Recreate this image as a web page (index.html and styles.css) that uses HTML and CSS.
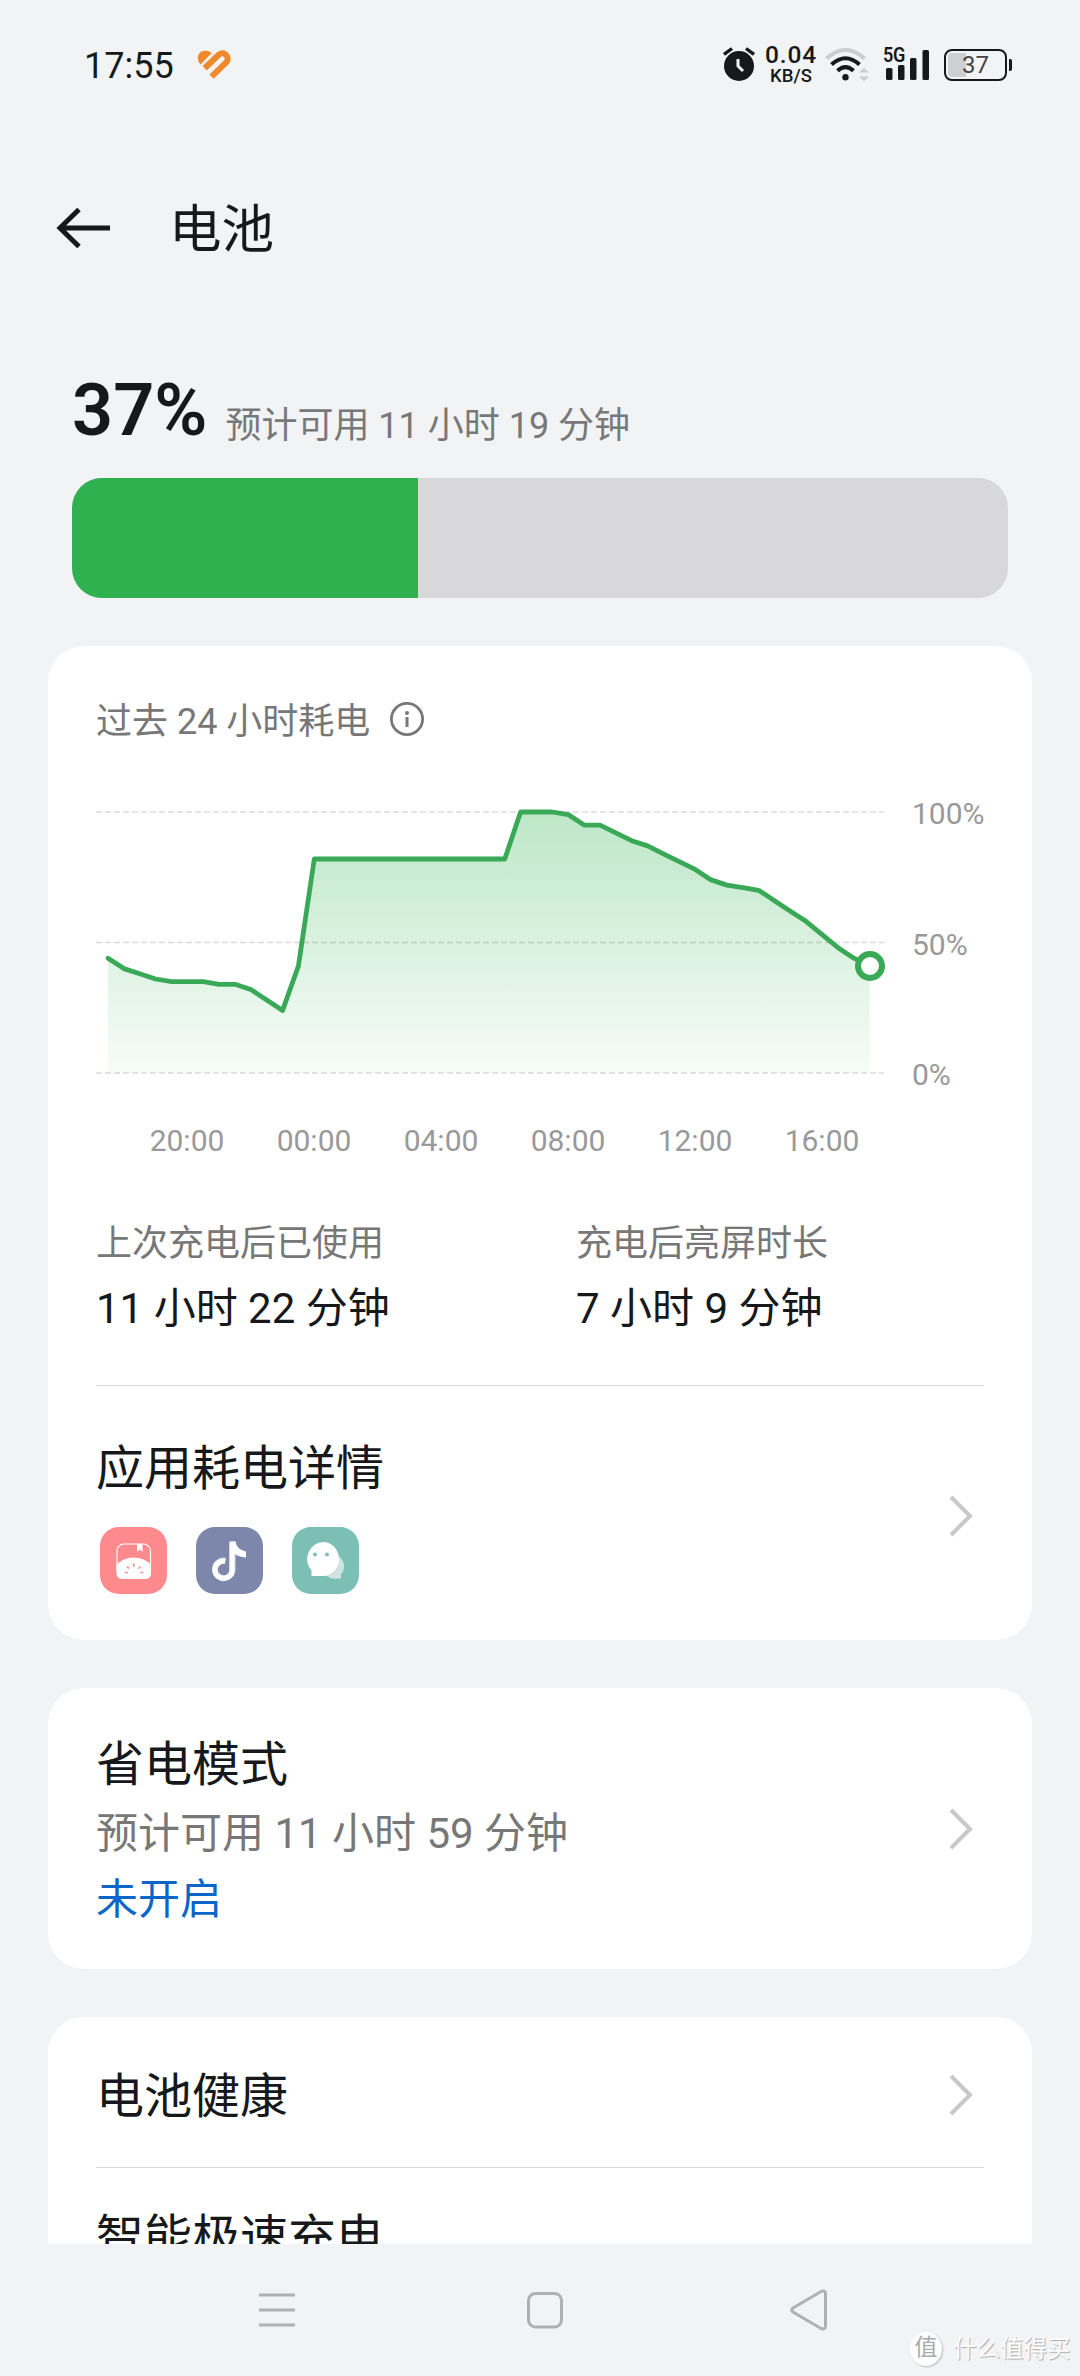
FILE: index.html
```html
<!DOCTYPE html>
<html lang="zh-CN">
<head>
<meta charset="utf-8">
<title>电池</title>
<link rel="stylesheet" href="styles.css">
</head>
<body>
<div class="screen">
  <header class="status">
    <span class="clock">17:55</span>
    <svg class="heart" width="34" height="30" viewBox="0 0 34 30">
      <path d="M3.6 14.4 C-1.4 9.800 0.400 0.800 8.200 0.800 C10.600 0.800 12.800 1.400 14.800 2.900 Z" fill="#ee8a2c"/>
      <path d="M7.600 18.200 L21.500 5 A5.300 5.300 0 0 1 29.200 12.400 L14.600 26.600" fill="none" stroke="#ee8a2c" stroke-width="6"/>
    </svg>
    <div class="tray">
      <svg class="alarm" width="32" height="36" viewBox="0 0 32 36">
        <circle cx="16" cy="20" r="15" fill="#16181a"/>
        <path d="M1 8.500 L9 2.500 M31 8.500 L23 2.500" stroke="#16181a" stroke-width="3.400"/>
        <path d="M15 13 V20 L20 25" fill="none" stroke="#f2f3f5" stroke-width="3"/>
      </svg>
      <div class="speed"><b>0.04</b><span>KB/S</span></div>
      <svg class="wifi" width="44" height="34" viewBox="0 0 44 34">
        <g fill="none">
          <path d="M1.500 10.500 Q20.500 -6.500 39.500 10.500" stroke="#cdcdcf" stroke-width="3.800"/>
          <path d="M6.500 16.500 Q20.500 4 34.500 16.500" stroke="#16181a" stroke-width="4"/>
          <path d="M12.500 22.800 Q20.500 15.500 28.500 22.800" stroke="#16181a" stroke-width="4"/>
        </g>
        <circle cx="20.500" cy="29.300" r="3.200" fill="#16181a"/>
        <path d="M34 24.500 L39 20 L44 24.500 Z M34 28.500 L39 33 L44 28.500 Z" fill="#cdcdcf"/>
      </svg>
      <div class="cell">
        <span class="gen">5G</span>
        <svg width="44" height="32" viewBox="0 0 44 32" fill="#16181a">
          <rect x="0" y="19" width="6.500" height="12" rx="1.500"/>
          <rect x="12" y="16" width="6.500" height="15" rx="1.500"/>
          <rect x="24" y="9" width="6.500" height="22" rx="1.500"/>
          <rect x="36.500" y="1" width="6.500" height="30" rx="1.500"/>
        </svg>
      </div>
      <div class="batt"><span class="batt-case"><i></i><em>37</em></span><span class="batt-tip"></span></div>
    </div>
  </header>

  <div class="titlebar">
    <svg width="54" height="40" viewBox="0 0 54 40"><path d="M54 20 H4 M23 1.500 L4 20 L23 38.500" fill="none" stroke="#16181a" stroke-width="5"/></svg>
    <h1>电池</h1>
  </div>

  <section class="summary">
    <strong>37%</strong><span>预计可用 11 小时 19 分钟</span>
  </section>
  <div class="bar"><div class="bar-fill" style="width:37%"></div></div>

  <main class="cards">
    <section class="card usage">
      <div class="card-head">
        <span>过去 24 小时耗电</span>
        <svg width="36" height="36" viewBox="0 0 36 36"><circle cx="18" cy="18" r="15.600" fill="none" stroke="#777" stroke-width="2.800"/><circle cx="18" cy="12" r="2" fill="#777"/><path d="M18 16 V26" stroke="#777" stroke-width="3"/></svg>
      </div>
      <div class="plot">
        <svg width="796" height="290" viewBox="0 0 796 290">
          <defs><linearGradient id="fade" gradientUnits="userSpaceOnUse" x1="0" y1="12" x2="0" y2="273"><stop offset="0" stop-color="#bde7c7"/><stop offset="1" stop-color="#f7fcf8"/></linearGradient></defs>
          <path id="area" fill="url(#fade)"/>
          <path d="M0 12 H788 M0 142.500 H788 M0 273 H788" stroke="#000" stroke-opacity=".14" stroke-width="1.600" stroke-dasharray="6 3"/>
          <path id="line" fill="none" stroke="#3aa957" stroke-width="4.800" stroke-linejoin="round" stroke-linecap="round"/>
          <circle cx="774" cy="166" r="12" fill="#fff" stroke="#3aa957" stroke-width="6"/>
        </svg>
        <div class="yaxis"><span>100%</span><span>50%</span><span>0%</span></div>
      </div>
      <div class="xaxis"><span>20:00</span><span>00:00</span><span>04:00</span><span>08:00</span><span>12:00</span><span>16:00</span></div>
      <div class="stats">
        <div><span>上次充电后已使用</span><b>11 小时 22 分钟</b></div>
        <div><span>充电后亮屏时长</span><b>7 小时 9 分钟</b></div>
      </div>
      <div class="row apps">
        <div>
          <h2>应用耗电详情</h2>
          <div class="icons">
            <svg width="68" height="68" viewBox="0 0 68 68">
              <rect width="67" height="67" rx="19" fill="#ff8a8d"/>
              <rect x="17" y="17" width="33.500" height="34" rx="7" fill="none" stroke="#fff" stroke-width="1.200"/>
              <path d="M37 17 H42.500 V25 L39.700 22.500 L37 25 Z" fill="#fff"/>
              <path d="M16.500 38 Q23 30.500 33.700 30.500 Q44.500 30.500 51 38 V46 Q51 52 45 52 H23 Q16.500 52 16.500 46 Z" fill="#fff"/>
              <path d="M33.700 37 V39 M27.500 40 L28.500 41 M40 40 L39 41 M25.500 45.500 H27 M41 45.500 H42.500" stroke="#ff8a8d" stroke-width="1.700" stroke-linecap="round"/>
            </svg>
            <svg width="68" height="68" viewBox="0 0 68 68">
              <rect width="67" height="67" rx="19" fill="#7c87ab"/>
              <path d="M36.500 15 V42.500 A8.800 8.800 0 1 1 29.500 33.800" fill="none" stroke="#d5d9e8" stroke-width="6"/>
              <path d="M36 14.500 V42.500 A8.500 8.500 0 1 1 29 34.500" fill="none" stroke="#fff" stroke-width="5"/>
              <path d="M36 14.500 H39.500 Q40.500 22.500 50 24.500 V30.500 Q42 30 37 25.500 Z" fill="#fff"/>
            </svg>
            <svg width="68" height="68" viewBox="0 0 68 68">
              <rect width="67" height="67" rx="19" fill="#7bbfb5"/>
              <path d="M47 29 Q52.500 34 52 41 Q51.500 45 49 47 V51.500 H45 Q38 52.500 34 48 Z" fill="#cfe3e0"/>
              <path d="M31 15 A16 17 0 0 1 31 49 H19.500 V43.500 A16 17 0 0 1 31 15 Z" fill="#fff"/>
              <circle cx="23" cy="27.500" r="2" fill="#7bbfb5"/><circle cx="35" cy="27.500" r="2" fill="#7bbfb5"/>
            </svg>
          </div>
        </div>
        <svg class="chev" width="24" height="42" viewBox="0 0 24 42"><path d="M2 2 L21 21 L2 40"/></svg>
      </div>
    </section>

    <section class="card saver row">
      <div>
        <h2>省电模式</h2>
        <p>预计可用 11 小时 59 分钟</p>
        <p class="state">未开启</p>
      </div>
      <svg class="chev" width="24" height="42" viewBox="0 0 24 42"><path d="M2 2 L21 21 L2 40"/></svg>
    </section>

    <section class="card more">
      <div class="row health"><h2>电池健康</h2><svg class="chev" width="24" height="42" viewBox="0 0 24 42"><path d="M2 2 L21 21 L2 40"/></svg></div>
      <div class="row charge"><h2>智能极速充电</h2></div>
    </section>
  </main>

  <nav class="nav">
    <svg width="36" height="40" viewBox="0 0 36 40"><path d="M0 5 H36 M0 20 H36 M0 35 H36"/></svg>
    <svg width="36" height="40" viewBox="0 0 36 40"><rect x="1.500" y="3.500" width="33" height="33.500" rx="7"/></svg>
    <svg width="38" height="42" viewBox="0 0 38 42"><path d="M3 19 L31 2.500 Q35.500 1 35.500 5 V37 Q35.500 41 31 39.500 L3 23 Q0.500 21 3 19 Z"/></svg>
  </nav>
  <div class="mark"><i>值</i><span>什么值得买</span></div>
</div>
<script src="chart.js"></script>
</body>
</html>
```
FILE: styles.css
```css
* { box-sizing: border-box; margin: 0; padding: 0; }
body { background: #f2f3f5; }
svg { display: block; flex: none; }
h1, h2 { font-weight: 400; }
i, em { font-style: normal; }

.screen {
  position: relative;
  width: 1080px;
  height: 2376px;
  overflow: hidden;
  display: flex;
  flex-direction: column;
  background: #f2f3f5;
  color: #16181a;
  font-family: Roboto, "Noto Sans CJK SC", sans-serif;
  font-weight: 400;
  white-space: nowrap;
}

/* status bar */
.status { height: 130px; padding: 0 68px 0 84px; display: flex; align-items: center; flex: none; }
.clock { font-size: 36px; width: 113px; padding-top: 1px; }
.tray { margin-left: auto; display: flex; align-items: center; }
.alarm { margin-right: 9px; margin-top: -3px; }
.speed { width: 54px; display: flex; flex-direction: column; align-items: center; }
.speed b { font-size: 24.5px; line-height: 22px; font-weight: 500; letter-spacing: .8px; }
.speed span { font-size: 18.5px; line-height: 20px; font-weight: 500; }
.wifi { margin-left: 7px; }
.cell { position: relative; width: 46px; margin-left: 17px; }
.gen { position: absolute; left: -3px; top: -3px; font-size: 21px; line-height: 19px; font-weight: 600; background: #f2f3f5; height: 18px; letter-spacing: -.5px; transform: scaleX(.86); transform-origin: left; }
.batt { display: flex; align-items: center; gap: 2px; margin-left: 12px; }
.batt-case { position: relative; width: 63px; height: 32px; border: 2.5px solid #16181a; border-radius: 8px; text-align: center; line-height: 28px; }
.batt-case i { position: absolute; left: 2px; top: 2px; bottom: 2px; width: 18px; background: #cfcfd1; border-radius: 4px 0 0 4px; }
.batt-case em { position: relative; font-size: 24px; color: #444; }
.batt-tip { width: 3px; height: 12px; background: #16181a; border-radius: 0 2px 2px 0; }

/* title */
.titlebar { height: 196px; padding: 0 56px; display: flex; align-items: center; flex: none; gap: 59px; }
.titlebar h1 { font-size: 52.5px; line-height: 60px; padding-top: 3px; }

/* charge summary */
.summary { height: 152px; padding: 43px 72px 0; display: flex; align-items: baseline; gap: 18px; flex: none; line-height: 84px; }
.summary strong { font-size: 72px; font-weight: 600; }
.summary span { font-size: 36px; color: #77787a; padding-top: 3px; position: relative; top: 3px; }
.bar { margin: 0 72px 48px; height: 120px; border-radius: 30px; background: #d8d8da; overflow: hidden; flex: none; }
.bar-fill { height: 100%; background: #30b150; }

/* cards */
.cards { flex: 1; min-height: 0; overflow: hidden; padding: 0 48px; display: flex; flex-direction: column; gap: 48px; }
.card { background: #fff; border-radius: 36px; padding: 0 48px; flex: none; }
.row { display: flex; align-items: center; justify-content: space-between; }
.card h2 { font-size: 48px; line-height: 60px; }
.chev { margin-right: 11px; fill: none; stroke: #c8c8ca; stroke-width: 4; }

.usage { height: 994px; }
.card-head { height: 146px; display: flex; align-items: center; gap: 19px; font-size: 36px; color: #777; }
.card-head span { padding-bottom: 2px; }
.plot { height: 310px; display: flex; padding-top: 8px; }
.yaxis { height: 287px; margin-left: 20px; display: flex; flex-direction: column; justify-content: space-between; font-size: 30px; line-height: 24px; color: #999; padding-top: 2px; }
.xaxis { display: flex; margin-left: 27.5px; font-size: 30px; line-height: 40px; height: 94px; padding-top: 19px; color: #999; }
.xaxis span { width: 127px; text-align: center; }
.stats { display: grid; grid-template-columns: 480px 1fr; height: 190px; padding-top: 24px; border-bottom: 1px solid #d9d9d9; }
.stats span { display: block; font-size: 36px; line-height: 48px; color: #777; }
.stats b { display: block; margin-top: 11px; font-size: 42px; line-height: 60px; font-weight: 400; }
.apps { height: 254px; padding-top: 6px; }
.apps h2 { padding-top: 1px; }
.icons { display: flex; gap: 28px; margin: 28px 0 0 4px; }

.saver { height: 281px; }
.saver p { font-size: 42px; line-height: 54px; margin-top: 12px; color: #777; }
.saver h2 { margin-top: 5px; }
.saver .state { color: #0a66c8; }

.more { border-radius: 36px 36px 0 0; }
.health { height: 151px; border-bottom: 1px solid #d9d9d9; padding-top: 6px; }
.health h2 { padding-top: 3px; }
.charge { height: 150px; padding-bottom: 10px; }

/* navigation */
.nav { height: 132px; flex: none; display: grid; grid-template-columns: 36px 36px 38px; column-gap: 232px; padding-left: 259px; align-items: center; }
.nav svg { fill: none; stroke: #b0b0b2; stroke-width: 3; }
.nav svg:last-child { margin-left: -5px; }
.mark { position: absolute; left: 910px; top: 2332px; display: flex; align-items: center; gap: 11px; color: #fff; font-size: 23.5px; line-height: 34px; text-shadow: 1px 1px 1px #aaa; }
.mark i { width: 32px; height: 34px; line-height: 32px; border-radius: 50%; background: #fff; color: #aaa; text-align: center; box-shadow: 1px 1px 2px #bbb; text-shadow: none; font-size: 23px; }
```
FILE: chart.js
```js
// Battery level at every half hour over the past day, in percent.
const levels = [44,40,38,36,35,35,35,34,34,32,28,24,41,82,82,82,82,82,82,82,82,82,82,82,82,82,100,100,100,99,95,95,92,89,87,84,81,78,74,72,71,70,66,62,58,53,48,44,41];
const pts = levels.map((v, i) => (12 + i * 15.87).toFixed(1) + ' ' + (273 - v * 2.61).toFixed(1));
document.getElementById('line').setAttribute('d', 'M' + pts.join(' L'));
document.getElementById('area').setAttribute('d', 'M12 273 L' + pts.join(' L') + ' L773.8 273 Z');
```
